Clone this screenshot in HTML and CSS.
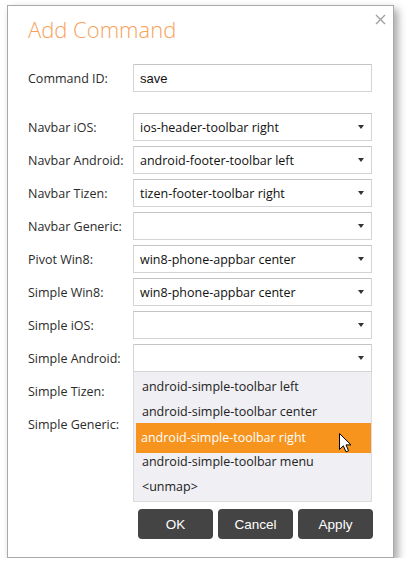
FILE: index.html
```html
<!DOCTYPE html>
<html>
<head>
<meta charset="utf-8">
<link rel="stylesheet" href="styles.css">
</head>
<body>
<div class="dialog">
  <div class="close">
    <svg width="11" height="11" viewBox="0 0 11 11"><path d="M1 1L10 10M10 1L1 10" stroke="#a0a0a0" stroke-width="1.4" fill="none"/></svg>
  </div>
  <h1 class="title">Add Command</h1>
  <div class="form">
    <div class="row id-row">
      <label class="label">Command ID:</label>
      <div class="input">save</div>
    </div>
    <div class="rows">
      <div class="row"><label class="label">Navbar iOS:</label><div class="select"><span>ios-header-toolbar right</span><i class="arrow"></i></div></div>
      <div class="row"><label class="label">Navbar Android:</label><div class="select"><span>android-footer-toolbar left</span><i class="arrow"></i></div></div>
      <div class="row"><label class="label">Navbar Tizen:</label><div class="select"><span>tizen-footer-toolbar right</span><i class="arrow"></i></div></div>
      <div class="row"><label class="label">Navbar Generic:</label><div class="select"><span></span><i class="arrow"></i></div></div>
      <div class="row"><label class="label">Pivot Win8:</label><div class="select"><span>win8-phone-appbar center</span><i class="arrow"></i></div></div>
      <div class="row"><label class="label">Simple Win8:</label><div class="select"><span>win8-phone-appbar center</span><i class="arrow"></i></div></div>
      <div class="row"><label class="label">Simple iOS:</label><div class="select"><span></span><i class="arrow"></i></div></div>
      <div class="row"><label class="label">Simple Android:</label>
        <div class="select open"><span></span><i class="arrow"></i>
          <ul class="dropdown">
            <li class="item">android-simple-toolbar left</li>
            <li class="item">android-simple-toolbar center</li>
            <li class="item hover">android-simple-toolbar right
              <svg class="cursor" width="13" height="20" viewBox="0 0 13 20"><path d="M0.5 0.5L0.5 16.5L4.3 12.8L7 18.8L9.6 17.7L7 11.9L12 11.9Z" fill="#fff" stroke="#000" stroke-width="1" stroke-linejoin="miter"/></svg>
            </li>
            <li class="item">android-simple-toolbar menu</li>
            <li class="item">&lt;unmap&gt;</li>
          </ul>
        </div>
      </div>
      <div class="row"><label class="label">Simple Tizen:</label><div class="select"><span></span><i class="arrow"></i></div></div>
      <div class="row"><label class="label">Simple Generic:</label><div class="select"><span></span><i class="arrow"></i></div></div>
    </div>
    <div class="buttons">
      <button class="btn">OK</button>
      <button class="btn">Cancel</button>
      <button class="btn">Apply</button>
    </div>
  </div>
</div>
</body>
</html>
```

FILE: styles.css
```css
html, body {
  margin: 0;
  padding: 0;
  background: #fff;
}
.dialog {
  position: relative;
  box-sizing: border-box;
  margin: 5px 0 0 7px;
  width: 387px;
  height: 553px;
  border: 1px solid #a9a9a9;
  background: #fff;
  box-shadow: 4px 4px 8px rgba(0,0,0,0.35);
  padding: 8px 20px 0 20px;
  font-family: "Open Sans", sans-serif;
}
.close {
  position: absolute;
  top: 8px;
  right: 7px;
  width: 11px;
  height: 11px;
  line-height: 0;
}
.title {
  margin: 0;
  font-weight: 300;
  font-size: 22px;
  line-height: 30px;
  color: #f7a25a;
  letter-spacing: 0;
}
.form {
  margin-top: 20px;
}
.row {
  display: grid;
  grid-template-columns: 105px 239px;
  align-items: center;
  height: 28px;
}
.id-row {
  margin-bottom: 21px;
}
.rows {
  display: flex;
  flex-direction: column;
  gap: 5px;
}
.label {
  font-size: 12.5px;
  color: #2b2b2b;
  white-space: nowrap;
}
.input, .select {
  box-sizing: border-box;
  height: 28px;
  border: 1px solid #d4d4d4;
  border-top-color: #c4c4c4;
  background: #fff;
  padding: 0 0 0 6px;
  display: flex;
  align-items: center;
  color: #111;
}
.input {
  font-family: "Liberation Sans", Arial, sans-serif;
  font-size: 13px;
}
.select {
  position: relative;
  font-size: 12.5px;
}
.select span {
  flex: 1;
  white-space: nowrap;
}
.arrow {
  width: 0;
  height: 0;
  border-left: 3.5px solid transparent;
  border-right: 3.5px solid transparent;
  border-top: 4px solid #333;
  margin-right: 7px;
}
.dropdown {
  position: absolute;
  top: 27px;
  left: -1px;
  width: 239px;
  box-sizing: border-box;
  margin: 0;
  padding: 2px 0 2px 1px;
  list-style: none;
  background: #efeff4;
  border: 1px solid #dcdcdc;
  border-top: none;
  z-index: 2;
}
.item {
  position: relative;
  height: 25px;
  line-height: 25px;
  padding-left: 7px;
  color: #222;
  font-size: 12.5px;
  white-space: nowrap;
}
.item.hover {
  height: 30px;
  line-height: 30px;
  margin: -1px 0 -4px 1px;
  padding-left: 5px;
  background: #f7941e;
  color: #fff;
  width: 230px;
}
.cursor {
  position: absolute;
  left: 203px;
  top: 10px;
}
.buttons {
  display: flex;
  justify-content: flex-end;
  gap: 5px;
  margin-top: 71px;
  padding-right: 0;
}
.btn {
  width: 75px;
  height: 30px;
  border: none;
  border-radius: 4px;
  background: #444;
  color: #fff;
  font-family: "Liberation Sans", Arial, sans-serif;
  font-size: 13.5px;
  padding: 0;
}
```
